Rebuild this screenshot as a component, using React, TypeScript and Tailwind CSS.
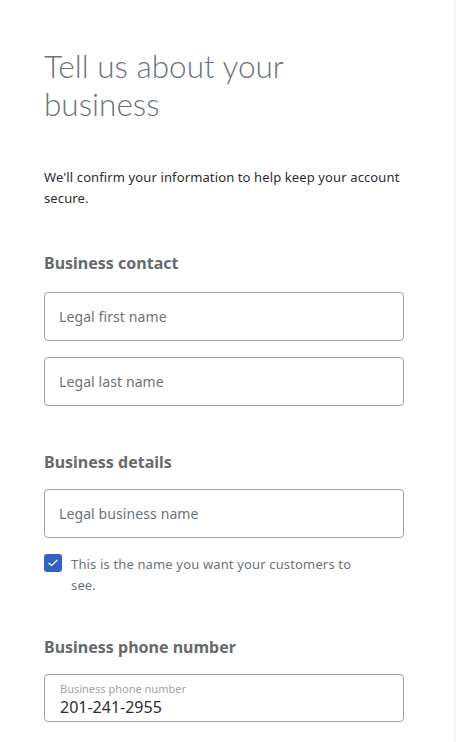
import React from "react";

function Field({ label }: { label: string }) {
  return (
    <div className="h-[49px] w-[360px] rounded-[4px] border border-[#9da3a6] bg-white flex items-center px-[14px]">
      <span className="text-[14px] tracking-[0.1px] text-[#6c7378]">{label}</span>
    </div>
  );
}

export default function App() {
  return (
    <div className="min-h-[742px] w-[456px] bg-white flex" style={{ fontFamily: "'Noto Sans', 'Open Sans', sans-serif" }}>
      <div className="w-[454px] pl-[44px] pt-[47px]">
        <h1 className="text-[31.5px] leading-[38px] font-light text-[#6c7378] w-[300px]" style={{ fontFamily: "Lato, 'Noto Sans', sans-serif" }}>
          Tell us about your business
        </h1>
        <p className="mt-[44px] text-[13px] leading-[21px] tracking-[0.12px] text-[#2c2e2f] w-[370px]">
          We'll confirm your information to help keep your account secure.
        </p>
        <h2 className="mt-[42px] text-[16px] leading-[24px] font-bold text-[#666a6d]">Business contact</h2>
        <div className="mt-[17px] flex flex-col gap-[16px]">
          <Field label="Legal first name" />
          <Field label="Legal last name" />
        </div>
        <h2 className="mt-[44px] text-[16px] leading-[24px] font-bold text-[#666a6d]">Business details</h2>
        <div className="mt-[15px]">
          <Field label="Legal business name" />
        </div>
        <div className="mt-[16px] flex gap-[9px]">
          <div className="h-[18px] w-[18px] shrink-0 rounded-[3px] bg-[#2f62c4] flex items-center justify-center">
            <svg width="10" height="8" viewBox="0 0 10 8" fill="none">
              <path d="M1 4.2L3.6 6.6L9 1.2" stroke="white" strokeWidth="1.3" strokeLinecap="round" strokeLinejoin="round" />
            </svg>
          </div>
          <p className="w-[290px] text-[13px] leading-[21px] tracking-[0.15px] text-[#6c7378]">This is the name you want your customers to see.</p>
        </div>
        <h2 className="mt-[39px] text-[16px] leading-[24px] font-bold text-[#666a6d]">Business phone number</h2>
        <div className="mt-[15px] h-[48px] w-[360px] rounded-[4px] border border-[#9da3a6] bg-white flex flex-col px-[15px] pt-[8px]">
          <span className="text-[11px] leading-[12px] text-[#9da3a6]">Business phone number</span>
          <span className="mt-[3px] text-[16px] leading-[18px] text-[#2c2e2f]">201-241-2955</span>
        </div>
      </div>
      <div className="w-[2px] bg-[#f5f5f5]" />
    </div>
  );
}
